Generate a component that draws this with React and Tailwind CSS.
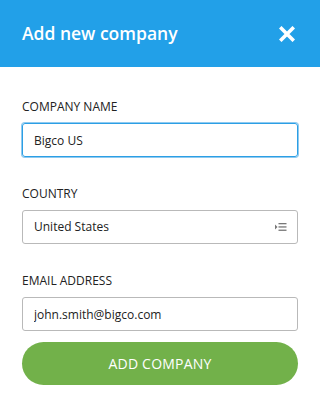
import React, { useState } from "react";

const AddCompany = () => {
  const [name, setName] = useState("Bigco US");
  const [country, setCountry] = useState("United States");
  const [email, setEmail] = useState("john.smith@bigco.com");

  return (
    <div className="w-[320px] h-[403px] bg-white font-['Open_Sans',sans-serif] text-[#222]">
      {/* Header */}
      <div className="h-[67px] bg-[#22a0e8] px-[22px] flex items-center justify-between">
        <h1 className="text-white text-[17.5px] font-semibold pb-[1px]">
          Add new company
        </h1>
        <button className="text-white mr-[3px]">
          <svg width="16" height="16" viewBox="0 0 16 16">
            <path d="M2.5 2.5 L13.5 13.5 M13.5 2.5 L2.5 13.5" stroke="white" strokeWidth="3.6" strokeLinecap="square" />
          </svg>
        </button>
      </div>

      {/* Form */}
      <form className="px-[22px] pt-[31px]" onSubmit={(e) => e.preventDefault()}>
        <label className="block text-[12px] leading-[18px] uppercase">Company name</label>
        <input
          className="mt-[7px] w-full h-[34px] px-[11px] text-[12px] border border-[#2c9fe5] rounded-[3px] outline-none shadow-[0_0_0_1px_#8fcaf0]"
          value={name}
          onChange={(e) => setName(e.target.value)}
        />

        <label className="block mt-[28px] text-[12px] leading-[18px] uppercase">Country</label>
        <div className="mt-[7px] w-full h-[34px] px-[11px] border border-[#b9b9b9] rounded-[3px] flex items-center justify-between text-[12px]">
          <span>{country}</span>
          <svg width="12" height="10" viewBox="0 0 12 10" className="mr-[-1px]">
            <path d="M0 2.5 L2.5 5 L0 7.5 Z" fill="#777" />
            <rect x="3.5" y="1" width="8" height="1.3" fill="#777" />
            <rect x="3.5" y="4.3" width="8" height="1.3" fill="#777" />
            <rect x="3.5" y="7.6" width="8" height="1.3" fill="#777" />
          </svg>
        </div>

        <label className="block mt-[28px] text-[12px] leading-[18px] uppercase">Email address</label>
        <input
          className="mt-[7px] w-full h-[34px] px-[11px] text-[12px] border border-[#b9b9b9] rounded-[3px] outline-none"
          value={email}
          onChange={(e) => setEmail(e.target.value)}
        />

        <button
          type="submit"
          className="mt-[11px] w-full h-[43px] rounded-full bg-[#72b14a] text-white text-[14px] uppercase tracking-[0.2px]"
        >
          Add company
        </button>
      </form>
    </div>
  );
};

export default AddCompany;
